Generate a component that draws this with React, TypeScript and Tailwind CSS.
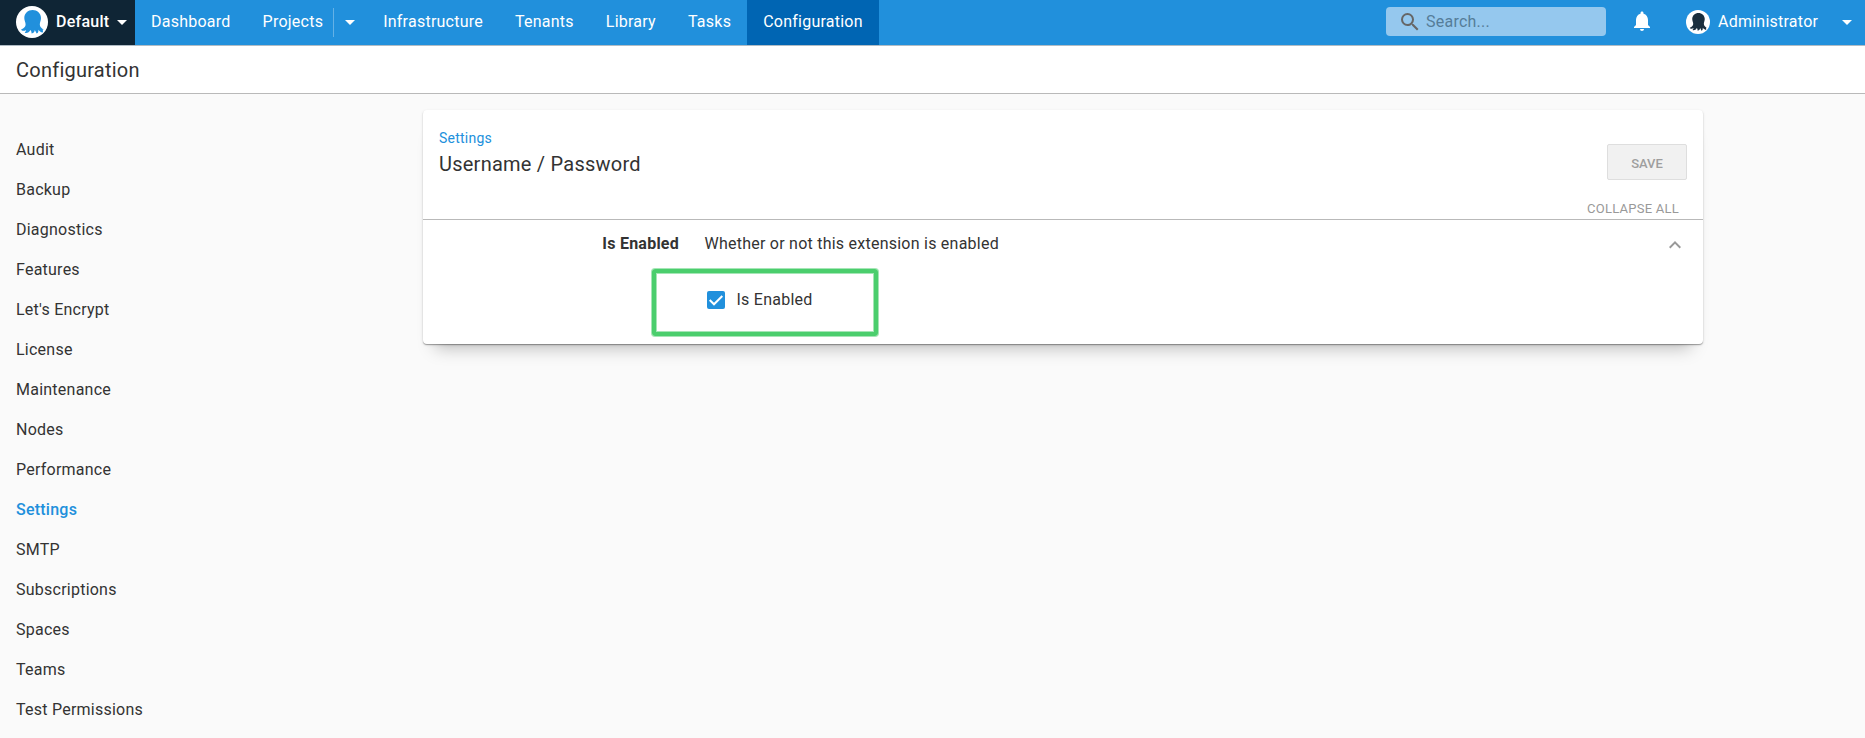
import React from "react";
import { MdSearch, MdNotifications, MdKeyboardArrowUp } from "react-icons/md";

const sections = [
  "Audit",
  "Backup",
  "Diagnostics",
  "Features",
  "Let's Encrypt",
  "License",
  "Maintenance",
  "Nodes",
  "Performance",
  "Settings",
  "SMTP",
  "Subscriptions",
  "Spaces",
  "Teams",
  "Test Permissions",
];

function Caret() {
  return (
    <svg width="10" height="5" viewBox="0 0 10 5" className="block shrink-0" fill="currentColor">
      <path d="M0 0h10L5 5z" />
    </svg>
  );
}

function Octopus({ size }: { size: number }) {
  return (
    <svg width={size} height={size} viewBox="0 0 32 32" className="block shrink-0">
      <circle cx="16" cy="16" r="16" fill="#fff" />
      <path
        fill="currentColor"
        d="M16.600 4C12 4 8.300 7.500 8.300 12c0 2.600 1.200 4.200 1.300 6.200.1 2.400-1.500 4-4.500 5.300.5 1.700 3 1.700 5.100.5-.2 1.100-.9 2-1.500 2.700 2.500.8 4.400-.5 5.700-2.800.9 1 1.100 2.100 1.200 3.600 2.300-.2 3-1.900 3.200-3.500.8 1 1.100 2.200 1.800 3.600 1.700-.7 2-2.100 1.700-3.900 1.200 1.400 2.300 2.400 4.400 2.800.6-1.200.3-2.100-.2-3 .4.300.9.400 1.300.2-2.500-1.600-4.100-3.100-4-5.500.1-2 1.200-3.600 1.200-6.200C25 7.500 21.200 4 16.600 4z"
      />
    </svg>
  );
}

function TopBar() {
  return (
    <header className="flex h-[46px] items-stretch border-b border-[#b0bcc5] bg-[#2190dc] text-white">
      <button className="flex w-[135px] items-center bg-[#0f2535] pl-4">
        <span className="-mt-px text-[#2190dc]">
          <Octopus size={32} />
        </span>
        <span className="ml-2 w-[53px] pb-0.5 text-left font-medium">Default</span>
        <span className="ml-2"><Caret /></span>
      </button>
      <nav className="flex items-stretch">
        <a className="flex items-center px-4 pb-0.5">Dashboard</a>
        <a className="flex items-center pl-4 pr-2.5 pb-0.5">Projects</a>
        <span className="my-2 w-px bg-[#64b1e6]" />
        <button className="flex w-[33px] items-center justify-center pr-0.5"><Caret /></button>
        <a className="flex items-center px-4 pb-0.5">Infrastructure</a>
        <a className="flex items-center px-4 pb-0.5">Tenants</a>
        <a className="flex items-center px-4 pb-0.5">Library</a>
        <a className="flex items-center px-4 pb-0.5">Tasks</a>
        <a className="flex items-center bg-[#0065b3] px-4 pb-0.5">Configuration</a>
      </nav>
      <div className="ml-auto flex items-center">
        <div className="mb-0.5 flex h-[29px] w-[220px] items-center rounded bg-[#95c8ee] pl-3">
          <MdSearch size={24} className="text-[#666]" />
          <span className="ml-1 text-[#557d99]">Search...</span>
        </div>
        <MdNotifications size={24} className="mb-[3px] ml-6 text-white" />
        <span className="-mt-px ml-8 text-[#1a2e3d]">
          <Octopus size={24} />
        </span>
        <span className="ml-2 w-[101px] pb-0.5">Administrator</span>
        <span className="ml-[23px] mr-[13px]"><Caret /></span>
      </div>
    </header>
  );
}

export default function App() {
  return (
    <div className="h-[738px] w-full overflow-hidden bg-[#fafafa] font-[Roboto,sans-serif] text-base leading-5 tracking-[0.24px] text-[#333]">
      <TopBar />
      <h1 className="flex h-12 items-center border-b border-[#b9b9b9] bg-white pl-4 text-xl">Configuration</h1>
      <div className="flex">
        <aside className="w-[423px] shrink-0 pl-4 pt-9">
          {sections.map((name) => (
            <a
              key={name}
              className={
                name === "Settings"
                  ? "flex h-10 items-center font-medium text-[#2190dc]"
                  : "flex h-10 items-center"
              }
            >
              {name}
            </a>
          ))}
        </aside>
        <main className="mt-4 h-[234px] w-[1280px] shrink-0 rounded bg-white shadow-[0_1px_1px_rgba(0,0,0,0.3),0_1px_3px_rgba(0,0,0,0.12),0_16px_16px_-12px_rgba(0,0,0,0.25)]">
          <div className="flex h-[110px] justify-between border-b border-[#b9b9b9] pl-4">
            <div className="pt-[18px]">
              <a className="block text-sm leading-5 text-[#2190dc]">Settings</a>
              <h2 className="mt-0.5 text-xl leading-7">Username / Password</h2>
            </div>
            <div className="flex flex-col items-end pr-4 pt-[34px]">
              <button className="h-9 w-20 rounded-xs border border-[#dedede] bg-[#f1f1f1] pt-1 text-[13px] font-medium tracking-normal text-[#9e9e9e]">
                SAVE
              </button>
              <button className="mr-2 mt-[19px] text-[13px] leading-5 text-[#999]">COLLAPSE ALL</button>
            </div>
          </div>
          <div className="flex h-[38px] items-start pt-3.5">
            <div className="w-64 text-right font-bold">Is Enabled</div>
            <div className="ml-[25.5px] grow">Whether or not this extension is enabled</div>
            <MdKeyboardArrowUp size={24} className="-mt-px mr-4 text-[#999]" />
          </div>
          <div className="ml-[229px] mt-[11px] flex h-[67px] w-[226px] items-center rounded-[3px] border-4 border-[#4bce6d] pb-[5px] pl-[51px] shadow-[0_0_0_1px_rgba(75,206,109,0.5),inset_0_0_0_1px_rgba(75,206,109,0.5)]">
            <span className="flex size-[18px] items-center justify-center rounded-xs bg-[#2190dc]">
              <svg width="18" height="18" viewBox="0 0 18 18" fill="none" stroke="#fff" strokeWidth="2">
                <path d="M2.7 9l4.3 4.3L15.3 5" />
              </svg>
            </span>
            <span className="ml-[11.5px]">Is Enabled</span>
          </div>
        </main>
      </div>
    </div>
  );
}
